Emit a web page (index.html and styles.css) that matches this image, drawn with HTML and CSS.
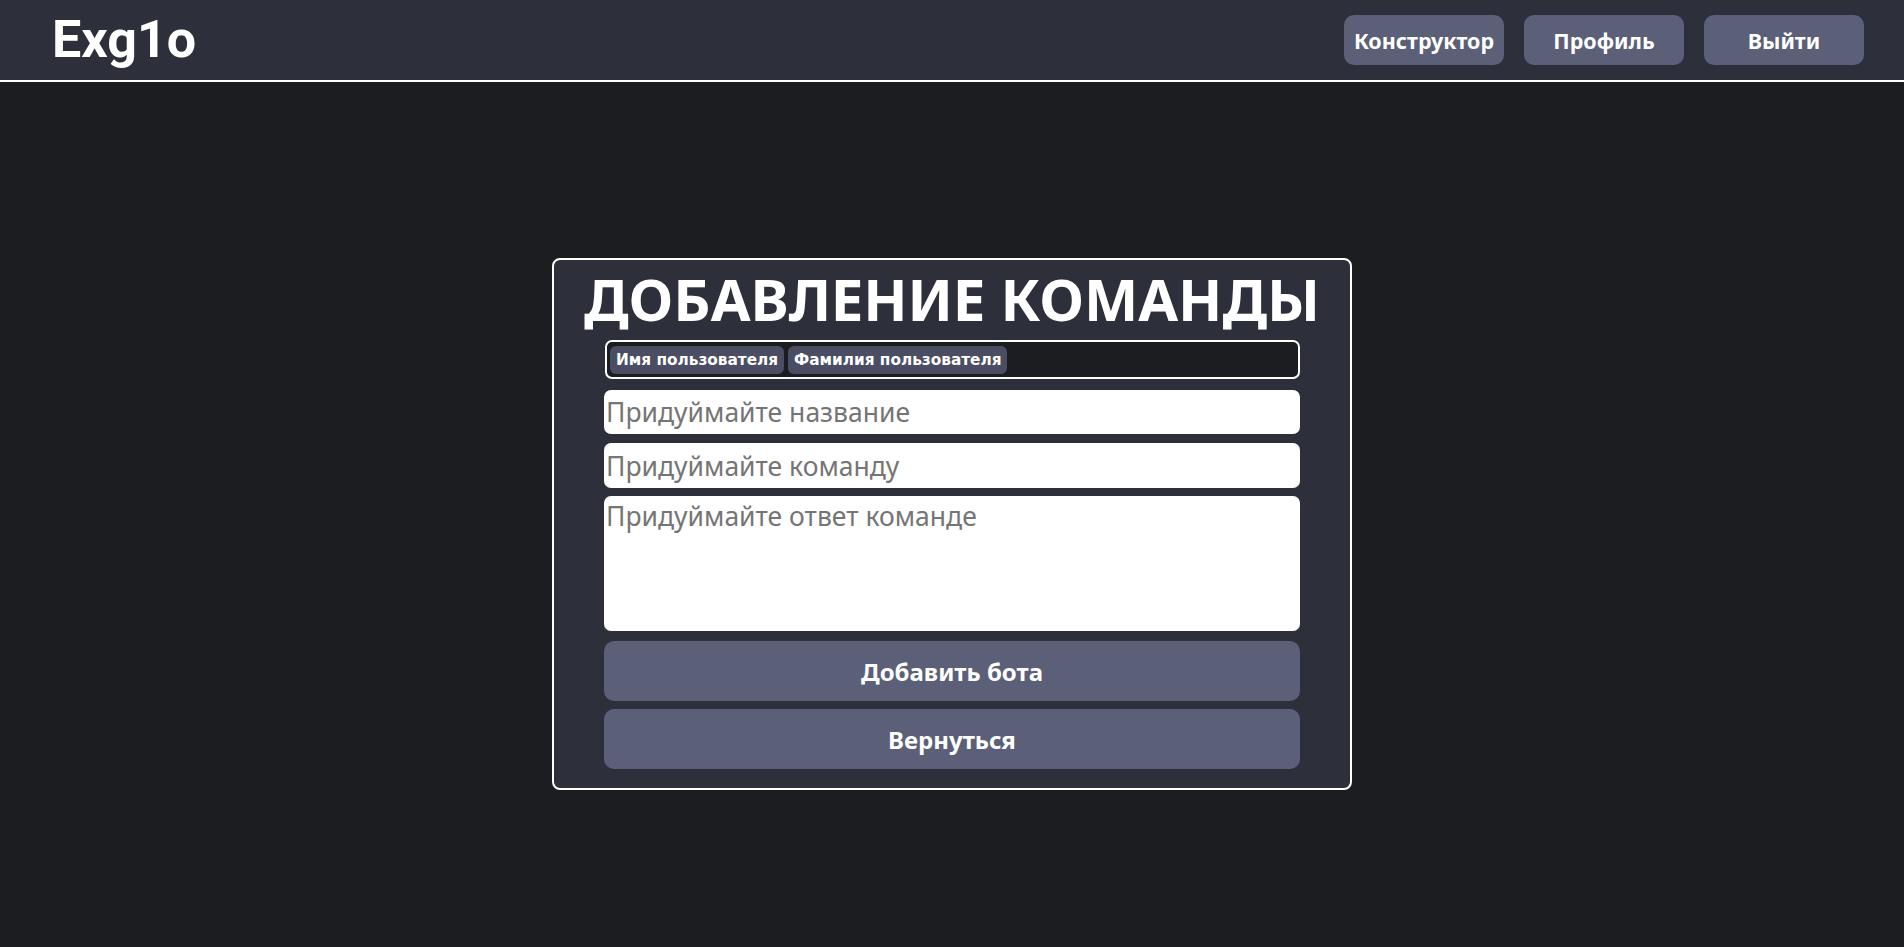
FILE: index.html
```html
<!DOCTYPE html>
<html lang="ru">
<head>
<meta charset="utf-8">
<title>Добавление команды</title>
<link rel="stylesheet" href="styles.css">
</head>
<body>
<header class="header">
  <div class="logo">Exg1o</div>
  <nav class="nav">
    <button class="nav-btn">Конструктор</button>
    <button class="nav-btn">Профиль</button>
    <button class="nav-btn">Выйти</button>
  </nav>
</header>
<main class="main">
  <section class="card">
    <h1 class="title">ДОБАВЛЕНИЕ КОМАНДЫ</h1>
    <div class="form">
      <div class="tags">
        <span class="tag">Имя пользователя</span>
        <span class="tag">Фамилия пользователя</span>
      </div>
      <input class="field field-name" type="text" placeholder="Придуймайте название">
      <input class="field field-cmd" type="text" placeholder="Придуймайте команду">
      <textarea class="field field-area" placeholder="Придуймайте ответ команде"></textarea>
      <button class="action action-add">Добавить бота</button>
      <button class="action action-back">Вернуться</button>
    </div>
  </section>
</main>
</body>
</html>
```

FILE: styles.css
```css
* { box-sizing: border-box; }
html, body { margin: 0; padding: 0; }
body {
  background: #1c1d21;
  font-family: "Noto Sans", "Open Sans", Roboto, sans-serif;
  color: #fff;
  min-height: 947px;
}
.header {
  height: 82px;
  background: #2d303b;
  border-bottom: 2px solid #fff;
  display: flex;
  align-items: center;
  justify-content: space-between;
  padding: 0 40px 0 52px;
}
.logo {
  font-family: Roboto, sans-serif;
  font-size: 52px;
  font-weight: 700;
  color: #fff;
  line-height: 1;
}
.nav { display: flex; gap: 20px; }
.nav-btn {
  width: 160px;
  height: 50px;
  border: none;
  border-radius: 10px;
  background: #5b5f78;
  color: #fff;
  font-family: "Noto Sans", "Open Sans", sans-serif;
  font-weight: 700;
  font-size: 21.5px;
  padding: 0;
}
.main {
  display: flex;
  justify-content: center;
  padding-top: 176px;
}
.card {
  width: 800px;
  background: #2d303b;
  border: 2px solid #fff;
  border-radius: 8px;
  padding: 0 50px 19px 50px;
}
.title {
  margin: 0 -50px;
  text-align: center;
  font-size: 57.6px;
  font-weight: 700;
  line-height: 78px;
  white-space: nowrap;
}
.form {
  display: flex;
  flex-direction: column;
  margin-top: 2px;
}
.tags {
  height: 39px;
  background: #1c1d21;
  border: 2px solid #fff;
  border-radius: 7px;
  padding: 4px 3px 3px 3px;
  display: flex;
  gap: 4px;
  margin-left: 1px;
}
.tag {
  height: 28px;
  background: #4b4e63;
  border-radius: 6px;
  padding: 0 6px;
  font-family: "DejaVu Sans", sans-serif;
  font-size: 15.3px;
  font-weight: 700;
  line-height: 28px;
  color: #fff;
  white-space: nowrap;
}
.field {
  border: none;
  outline: none;
  background: #fff;
  border-radius: 7px;
  font-family: "Noto Sans", "Open Sans", sans-serif;
  font-size: 26.5px;
  color: #222;
  padding: 1px 2px;
  width: 100%;
}
.field::placeholder { color: #757575; }
.field-name { height: 44px; margin-top: 11px; }
.field-cmd { height: 45px; margin-top: 9px; }
.field-area { height: 135px; margin-top: 8px; resize: none; padding-top: 2px; display: block; line-height: 36px; }
.action {
  height: 60px;
  border: none;
  border-radius: 10px;
  background: #5b5f78;
  color: #fff;
  font-family: "Noto Sans", "Open Sans", sans-serif;
  font-weight: 700;
  font-size: 24px;
  width: 100%;
}
.action-add { margin-top: 10px; }
.action-back { margin-top: 8px; }
```
